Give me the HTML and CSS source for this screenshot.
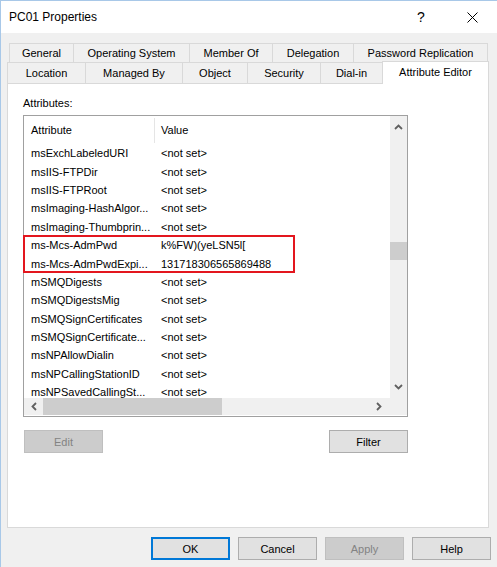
FILE: index.html
```html
<!DOCTYPE html>
<html>
<head>
<meta charset="utf-8">
<link rel="stylesheet" href="styles.css">
</head>
<body>
<div class="window">
  <div class="titlebar">
    <span class="title">PC01 Properties</span>
    <span class="help-q">?</span>
    <span class="close">
      <svg width="11" height="11" viewBox="0 0 11 11"><path d="M0.5 0.5 L10.5 10.5 M10.5 0.5 L0.5 10.5" stroke="#000" stroke-width="1" fill="none"/></svg>
    </span>
  </div>
  <div class="tabs">
    <div class="tabrow row1">
      <div class="tab first w-general">General</div>
      <div class="tab w-os">Operating System</div>
      <div class="tab w-member">Member Of</div>
      <div class="tab w-deleg">Delegation</div>
      <div class="tab w-pwd">Password Replication</div>
    </div>
    <div class="tabrow row2">
      <div class="tab first w-loc">Location</div>
      <div class="tab w-managed">Managed By</div>
      <div class="tab w-object">Object</div>
      <div class="tab w-security">Security</div>
      <div class="tab noright w-dial">Dial-in</div>
      <div class="tab selected w-attr">Attribute Editor</div>
    </div>
  </div>
  <div class="panel">
    <div class="label">Attributes:</div>
    <div class="list">
      <div class="list-main">
        <div class="list-head">
          <div class="c1">Attribute</div>
          <div class="c2 head-value">Value</div>
        </div>
        <div class="row"><div class="c1">msExchLabeledURI</div><div class="c2">&lt;not set&gt;</div></div>
        <div class="row"><div class="c1">msIIS-FTPDir</div><div class="c2">&lt;not set&gt;</div></div>
        <div class="row"><div class="c1">msIIS-FTPRoot</div><div class="c2">&lt;not set&gt;</div></div>
        <div class="row"><div class="c1">msImaging-HashAlgor...</div><div class="c2">&lt;not set&gt;</div></div>
        <div class="row"><div class="c1">msImaging-Thumbprin...</div><div class="c2">&lt;not set&gt;</div></div>
        <div class="row"><div class="c1">ms-Mcs-AdmPwd</div><div class="c2">k%FW)(yeLSN5l[</div></div>
        <div class="row"><div class="c1">ms-Mcs-AdmPwdExpi...</div><div class="c2">131718306565869488</div></div>
        <div class="row"><div class="c1">mSMQDigests</div><div class="c2">&lt;not set&gt;</div></div>
        <div class="row"><div class="c1">mSMQDigestsMig</div><div class="c2">&lt;not set&gt;</div></div>
        <div class="row"><div class="c1">mSMQSignCertificates</div><div class="c2">&lt;not set&gt;</div></div>
        <div class="row"><div class="c1">mSMQSignCertificate...</div><div class="c2">&lt;not set&gt;</div></div>
        <div class="row"><div class="c1">msNPAllowDialin</div><div class="c2">&lt;not set&gt;</div></div>
        <div class="row"><div class="c1">msNPCallingStationID</div><div class="c2">&lt;not set&gt;</div></div>
        <div class="row"><div class="c1">msNPSavedCallingSt...</div><div class="c2">&lt;not set&gt;</div></div>
      </div>
      <div class="vscroll">
        <div class="vbtn"><svg width="9" height="6" viewBox="0 0 9 6"><path d="M1 5 L4.5 1.5 L8 5" stroke="#606060" stroke-width="1.8" fill="none"/></svg></div>
        <div class="vtrack"><div class="vthumb"></div></div>
        <div class="vbtn"><svg width="9" height="6" viewBox="0 0 9 6"><path d="M1 1 L4.5 4.5 L8 1" stroke="#606060" stroke-width="1.8" fill="none"/></svg></div>
      </div>
      <div class="hscroll">
        <div class="hbtn left"><svg width="6" height="9" viewBox="0 0 6 9"><path d="M5 1 L1.5 4.5 L5 8" stroke="#606060" stroke-width="1.8" fill="none"/></svg></div>
        <div class="hthumb"></div>
        <div class="htrack"></div>
        <div class="hbtn right"><svg width="6" height="9" viewBox="0 0 6 9"><path d="M1 1 L4.5 4.5 L1 8" stroke="#606060" stroke-width="1.8" fill="none"/></svg></div>
      </div>
      <div class="corner"></div>
      <div class="highlight"></div>
    </div>
    <div class="panel-buttons">
      <div class="btn disabled">Edit</div>
      <div class="btn">Filter</div>
    </div>
  </div>
  <div class="dialog-buttons">
    <div class="btn default">OK</div>
    <div class="btn">Cancel</div>
    <div class="btn disabled">Apply</div>
    <div class="btn">Help</div>
  </div>
</div>
</body>
</html>
```
FILE: styles.css
```css
* { box-sizing: border-box; }
html, body { margin: 0; padding: 0; }
body {
  width: 497px;
  height: 567px;
  overflow: hidden;
  background: #f0f0f0;
  font-family: "Liberation Sans", Arial, sans-serif;
  font-size: 11px;
  color: #000;
}
.window {
  width: 497px;
  height: 567px;
  border-left: 1px solid #a8c8e8;
  border-top: 1px solid #a8c8e8;
  background: #f0f0f0;
}
.titlebar {
  height: 32px;
  background: #fff;
  display: flex;
  align-items: center;
  padding-left: 8px;
}
.title { font-size: 12px; }
.help-q {
  margin-left: auto;
  font-size: 14px;
  width: 8px;
  margin-right: 42px;
}
.close {
  width: 11px;
  height: 11px;
  margin-right: 19px;
  display: flex;
}
.tabs { padding-top: 10px; }
.tabrow { display: flex; }
.row1 { height: 19px; padding-left: 8px; }
.row2 { height: 21px; padding-left: 6px; align-items: flex-end; }
.tab {
  display: flex;
  align-items: center;
  justify-content: center;
  border-top: 1px solid #d9d9d9;
  border-right: 1px solid #d9d9d9;
  background: #f0f0f0;
  white-space: nowrap;
}
.tab.first { border-left: 1px solid #d9d9d9; }
.tab.noright { border-right: none; }
.row1 .tab { height: 19px; }
.row2 .tab { height: 21px; }
.tab.selected {
  height: 23px;
  margin-bottom: -1px;
  background: #fff;
  border-left: 1px solid #d9d9d9;
  position: relative;
  z-index: 1;
  padding-bottom: 3px;
}
.w-general { width: 65px; }
.w-os { width: 116px; }
.w-member { width: 83px; }
.w-deleg { width: 81px; }
.w-pwd { width: 134px; }
.w-loc { width: 79px; }
.w-managed { width: 97px; }
.w-object { width: 65px; }
.w-security { width: 73px; }
.w-dial { width: 61px; }
.w-attr { width: 107px; }

.panel {
  margin-left: 6px;
  width: 482px;
  height: 445px;
  background: #fff;
  border: 1px solid #d9d9d9;
  padding: 12px 0 0 15px;
}
.label { line-height: 14px; height: 14px; margin-bottom: 5px; }
.list {
  position: relative;
  width: 385px;
  height: 302px;
  border: 1px solid #a0a0a0;
  display: grid;
  grid-template-columns: 366px 17px;
  grid-template-rows: 282px 18px;
}
.list-main { overflow: hidden; background: #fff; }
.list-head { display: flex; height: 28px; align-items: center; }
.c1 { width: 130px; padding-left: 7px; white-space: nowrap; overflow: hidden; }
.c2 { padding-left: 7px; white-space: nowrap; }
.head-value {
  border-left: 1px solid #e5e5e5;
  height: 25px;
  display: flex;
  align-items: center;
  padding-left: 6px;
}
.row { display: flex; height: 18.4px; align-items: center; }
.vscroll {
  background: #f0f0f0;
  display: flex;
  flex-direction: column;
}
.vbtn {
  height: 22px;
  display: flex;
  align-items: center;
  justify-content: center;
}
.vtrack { flex: 1; padding-top: 104px; }
.vthumb { height: 18px; background: #cdcdcd; }
.hscroll {
  background: #f0f0f0;
  display: flex;
  height: 17px;
}
.hbtn { display: flex; align-items: center; justify-content: center; }
.hbtn.left { width: 19px; }
.hbtn.right { width: 22px; }
.hthumb { width: 179px; background: #cdcdcd; }
.htrack { flex: 1; }
.corner { background: #f0f0f0; height: 17px; }
.highlight {
  position: absolute;
  left: -1px;
  top: 119px;
  width: 272px;
  height: 38px;
  border: 2px solid #e3161e;
  pointer-events: none;
}
.panel-buttons {
  margin-top: 13px;
  margin-left: 1px;
  width: 384px;
  display: flex;
  justify-content: space-between;
}
.btn {
  width: 79px;
  height: 23px;
  background: #e1e1e1;
  border: 1px solid #adadad;
  display: flex;
  align-items: center;
  justify-content: center;
}
.btn.disabled {
  background: #cccccc;
  border-color: #bfbfbf;
  color: #838383;
}
.btn.default {
  border: 1px solid #0078d7;
  box-shadow: inset 0 0 0 1px #0078d7;
}
.dialog-buttons {
  margin-top: 9px;
  display: flex;
  justify-content: flex-end;
  gap: 8px;
  padding-right: 6px;
}
```
